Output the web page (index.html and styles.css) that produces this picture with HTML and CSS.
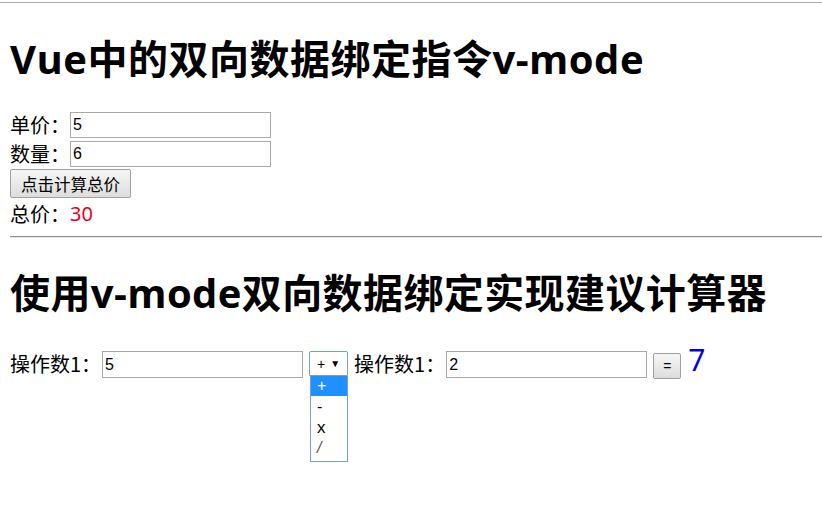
FILE: index.html
```html
<!DOCTYPE html>
<html lang="zh-CN">
<head>
<meta charset="utf-8">
<title>Vue v-model</title>
<link rel="stylesheet" href="styles.css">
</head>
<body>
<div class="topline"></div>
<main class="page">
  <h1 class="title">Vue中的双向数据绑定指令v-mode</h1>
  <div class="form">
    <div class="row"><span class="label">单价：</span><input class="field" type="text" value="5"></div>
    <div class="row"><span class="label">数量：</span><input class="field" type="text" value="6"></div>
    <div class="row btn-row"><button class="btn">点击计算总价</button></div>
    <div class="row total"><span class="label">总价：</span><span class="sum">30</span></div>
  </div>
  <hr class="divider">
  <h1 class="title second">使用v-mode双向数据绑定实现建议计算器</h1>
  <div class="calc">
    <span class="label op1">操作数1：</span>
    <input class="field" type="text" value="5">
    <div class="picker">
      <div class="picker-box"><span>+</span><span class="arrow">▼</span></div>
      <div class="drop">
        <div class="drop-item on">+</div>
        <div class="drop-item">-</div>
        <div class="drop-item big">x</div>
        <div class="drop-item last">/</div>
      </div>
    </div>
    <span class="label op2">操作数1：</span>
    <input class="field" type="text" value="2">
    <button class="btn eq">=</button>
    <span class="result">7</span>
  </div>
</main>
</body>
</html>
```
FILE: styles.css
```css
html, body {
  margin: 0;
  padding: 0;
  background: #fff;
}
body {
  font-family: "Noto Sans CJK SC", "Noto Sans", sans-serif;
  color: #000;
  font-size: 20px;
}
.topline {
  margin-top: 2px;
  height: 1px;
  background: #a9a9a9;
}
.page {
  padding: 0 0 0 10px;
}
.title {
  margin: 32px 0 0 0;
  font-family: "Open Sans", "Noto Sans CJK SC", sans-serif;
  font-size: 40px;
  line-height: 48px;
  font-weight: 700;
  letter-spacing: 0.5px;
}
.form {
  margin-top: 28px;
  display: flex;
  flex-direction: column;
}
.row {
  display: flex;
  align-items: center;
  height: 27px;
  margin-bottom: 2px;
}
.label {
  font-size: 20px;
  line-height: 24px;
  width: 60px;
  flex: none;
}
.field {
  box-sizing: border-box;
  width: 201px;
  height: 27px;
  border: 1px solid #a9a9a9;
  padding: 1px 2px;
  font-family: "Liberation Sans", Arial, sans-serif;
  font-size: 16px;
  color: #000;
  margin: 0;
  background: #fff;
  outline: none;
  flex: none;
}
.row .field {
  height: 26px;
}
.btn {
  box-sizing: border-box;
  height: 29px;
  padding: 0 10px;
  border: 1px solid #a0a0a0;
  border-radius: 2px;
  background: linear-gradient(#f6f6f6, #dddddd);
  font-family: "Noto Sans CJK SC", sans-serif;
  font-size: 16.5px;
  color: #000;
  margin: 0;
}
.btn-row {
  height: 29px;
}
.sum {
  color: #e8001c;
  font-family: "Noto Sans", sans-serif;
  font-size: 20px;
}
.divider {
  margin: 7px 0 0 0;
  border: 0;
  border-top: 1px solid #8f8f8f;
  border-bottom: 1px solid #e6e6e6;
  height: 0;
}
.second {
  margin-top: 31px;
  letter-spacing: 0.4px;
}
.calc {
  margin-top: 34px;
  display: flex;
  align-items: flex-start;
  min-height: 27px;
}
.calc .label {
  width: auto;
  margin-top: 1px;
}
.op1 {
  margin-right: 1px;
}
.op2 {
  margin-left: 6px;
  margin-right: 1px;
}
.picker {
  margin-left: 6px;
  width: 39px;
  flex: none;
}
.picker-box {
  box-sizing: border-box;
  width: 39px;
  height: 25px;
  border: 1px solid #7a9cd3;
  border-radius: 2px 2px 0 0;
  display: flex;
  align-items: center;
  justify-content: center;
  gap: 5px;
  font-family: "Liberation Sans", Arial, sans-serif;
  font-size: 14px;
  background: #fff;
}
.arrow {
  font-size: 10px;
}
.drop {
  display: block;
  margin-left: 1px;
  padding-bottom: 3px;
  width: 38px;
  box-sizing: border-box;
  border: 1px solid #7a9cd3;
  border-top: 0;
  background: #fff;
  font-family: "Liberation Sans", Arial, sans-serif;
  font-size: 16px;
  color: #000;
}
.drop-item {
  display: block;
  height: 21px;
  line-height: 21px;
  padding-left: 6px;
}
.drop-item.on {
  height: 20px;
  line-height: 20px;
  background: #1e90ff;
  color: #fff;
}
.drop-item.big {
  font-size: 17px;
}
.drop-item.last {
  height: 20px;
  line-height: 20px;
  color: #555;
  font-style: italic;
}
.eq {
  margin-left: 6px;
  margin-top: 2px;
  width: 28px;
  height: 26px;
  padding: 0;
  font-family: "Liberation Sans", Arial, sans-serif;
  font-size: 14px;
  flex: none;
}
.result {
  margin-left: 7px;
  margin-top: -9px;
  color: #0000e6;
  font-family: "Noto Sans", sans-serif;
  font-size: 30px;
  line-height: 36px;
}
```
